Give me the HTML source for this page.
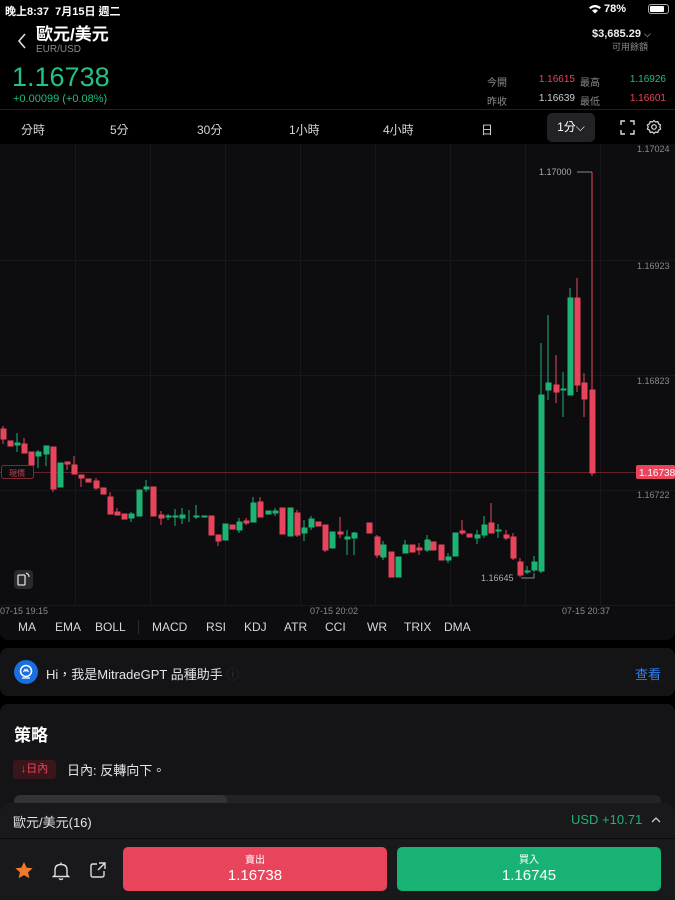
<!DOCTYPE html>
<html><head><meta charset="utf-8">
<style>
*{margin:0;padding:0;box-sizing:border-box}
body{width:675px;height:900px;background:#000;color:#e8e8ea;font-family:"Liberation Sans","Noto Sans CJK TC",sans-serif;position:relative;overflow:hidden}
.a{position:absolute;white-space:nowrap}
.g{color:#1fbf7f}.r{color:#e8455c}.gr{color:#8a8a90}
.tab{position:absolute;top:121px;font-size:12px;color:#d8d8dc}
.ind{position:absolute;top:620px;font-size:12px;color:#d8d8dc}
.st{position:absolute;font-size:10px;text-align:right}
</style></head><body>
<!-- status -->
<div class="a" style="left:5px;top:3px;font-size:11px;font-weight:bold;color:#fff">晚上8:37&nbsp;&nbsp;7月15日 週二</div>
<div class="a" style="left:604px;top:3px;font-size:11px;font-weight:bold;color:#fff">78%</div>
<svg class="a" style="left:588px;top:4px" width="14" height="10" viewBox="0 0 14 10"><path d="M1 3.5Q7 -1.5 13 3.5L11.5 5Q7 1.5 2.5 5ZM4 6.5Q7 4 10 6.5L7 9.5Z" fill="#fff"/></svg>
<div class="a" style="left:648px;top:4px;width:21px;height:10px;border:1px solid #aaa;border-radius:3px"><div style="margin:1px;width:14px;height:6px;background:#fff;border-radius:1px"></div></div>
<!-- header -->
<svg class="a" style="left:16px;top:32px" width="12" height="18"><path d="M9 2L3 9L9 16" stroke="#ddd" stroke-width="1.6" fill="none"/></svg>
<div class="a" style="left:36px;top:20px;font-size:17px;font-weight:bold;color:#fff">歐元/美元</div>
<div class="a gr" style="left:36px;top:44px;font-size:10px">EUR/USD</div>
<div class="a" style="left:592px;top:28px;font-size:11px;font-weight:bold;color:#eee">$3,685.29 <span style="font-weight:normal;font-size:9px">⌵</span></div>
<div class="a gr" style="left:612px;top:40px;font-size:9px">可用餘額</div>
<div class="a g" style="left:12px;top:62px;font-size:27px;color:#22c285">1.16738</div>
<div class="a g" style="left:13px;top:93px;font-size:11px">+0.00099 (+0.08%)</div>
<div class="st gr" style="left:487px;top:74px">今開</div>
<div class="st r" style="right:100px;top:74px">1.16615</div>
<div class="st gr" style="left:580px;top:74px">最高</div>
<div class="st g" style="right:9px;top:74px">1.16926</div>
<div class="st gr" style="left:487px;top:93px">昨收</div>
<div class="st" style="right:100px;top:93px;color:#ccc">1.16639</div>
<div class="st gr" style="left:580px;top:93px">最低</div>
<div class="st r" style="right:9px;top:93px">1.16601</div>
<div class="a" style="left:0;top:109px;width:675px;height:1px;background:#222"></div>
<!-- tabs -->
<div class="tab" style="left:21px">分時</div>
<div class="tab" style="left:110px">5分</div>
<div class="tab" style="left:197px">30分</div>
<div class="tab" style="left:289px">1小時</div>
<div class="tab" style="left:383px">4小時</div>
<div class="tab" style="left:481px">日</div>
<div class="a" style="left:547px;top:113px;width:48px;height:29px;background:#232327;border-radius:5px;font-size:12px;color:#fff;text-align:center;line-height:29px">1分⌵</div>
<svg class="a" style="left:620px;top:120px" width="15" height="15"><path d="M1 5V1H5M10 1H14V5M14 10V14H10M5 14H1V10" stroke="#ddd" stroke-width="1.4" fill="none"/></svg>
<svg class="a" style="left:646px;top:119px" width="16" height="16" viewBox="0 0 16 16"><path d="M8 1.5L9.5 3 11.8 2.6 12.5 4.8 14.6 6 13.8 8 14.6 10 12.5 11.2 11.8 13.4 9.5 13 8 14.5 6.5 13 4.2 13.4 3.5 11.2 1.4 10 2.2 8 1.4 6 3.5 4.8 4.2 2.6 6.5 3Z" stroke="#ddd" stroke-width="1.2" fill="none"/><circle cx="8" cy="8" r="2.3" stroke="#ddd" stroke-width="1.2" fill="none"/></svg>
<!-- chart -->
<div class="a" style="left:0;top:144px;width:675px;height:496px;background:#0d0d10;border-radius:0 0 8px 8px"></div>
<svg class="a" style="left:0;top:144px" width="675" height="470" viewBox="0 144 675 470">
<g stroke="#18181c" stroke-width="1">
<path d="M75.5 144V605M150.5 144V605M225.5 144V605M300.5 144V605M375.5 144V605M450.5 144V605M525.5 144V605M600.5 144V605M0 260.5H675M0 375.5H675M0 490.5H675M0 605.5H675"/>
</g>
<line x1="0" y1="472.5" x2="675" y2="472.5" stroke="#5e232b" stroke-width="1"/>
<g stroke="#e8455c" fill="#e8455c">
<line x1="3" y1="426" x2="3" y2="444"/><rect x="1" y="429" width="5" height="10"/>
<rect x="8" y="441" width="5" height="5"/>
<line x1="24" y1="438" x2="24" y2="453"/><rect x="22" y="444" width="5" height="9"/>
<rect x="29" y="452" width="5" height="13"/>
<line x1="53" y1="447" x2="53" y2="492"/><rect x="51" y="447" width="5" height="42"/>
<line x1="67" y1="462" x2="67" y2="470"/><rect x="65" y="462" width="5" height="2"/>
<line x1="74" y1="456" x2="74" y2="474"/><rect x="72" y="465" width="5" height="9"/>
<line x1="81" y1="475" x2="81" y2="487"/><rect x="79" y="475" width="5" height="3"/>
<rect x="86" y="479" width="5" height="3"/>
<line x1="96" y1="478" x2="96" y2="490"/><rect x="94" y="481" width="5" height="7"/>
<rect x="101" y="488" width="5" height="6"/>
<line x1="110" y1="492" x2="110" y2="514"/><rect x="108" y="497" width="5" height="17"/>
<line x1="117" y1="508" x2="117" y2="515"/><rect x="115" y="512" width="5" height="3"/>
<rect x="122" y="514" width="5" height="5"/>
<line x1="153" y1="487" x2="153" y2="516"/><rect x="151" y="487" width="5" height="29"/>
<line x1="161" y1="511" x2="161" y2="525"/><rect x="159" y="515" width="5" height="3"/>
<line x1="211" y1="516" x2="211" y2="535"/><rect x="209" y="516" width="5" height="19"/>
<line x1="218" y1="535" x2="218" y2="546"/><rect x="216" y="535" width="5" height="6"/>
<rect x="230" y="525" width="5" height="4"/>
<line x1="246" y1="518" x2="246" y2="525"/><rect x="244" y="521" width="5" height="2"/>
<line x1="260" y1="497" x2="260" y2="517"/><rect x="258" y="502" width="5" height="15"/>
<rect x="280" y="508" width="5" height="26"/>
<line x1="297" y1="510" x2="297" y2="537"/><rect x="295" y="513" width="5" height="22"/>
<rect x="316" y="522" width="5" height="4"/>
<line x1="325" y1="525" x2="325" y2="552"/><rect x="323" y="525" width="5" height="25"/>
<line x1="340" y1="517" x2="340" y2="538"/><rect x="338" y="532" width="5" height="2"/>
<rect x="367" y="523" width="5" height="10"/>
<line x1="377" y1="535" x2="377" y2="558"/><rect x="375" y="537" width="5" height="18"/>
<rect x="389" y="552" width="5" height="25"/>
<rect x="410" y="545" width="5" height="7"/>
<line x1="419" y1="543" x2="419" y2="555"/><rect x="417" y="548" width="5" height="2"/>
<rect x="431" y="542" width="5" height="8"/>
<rect x="439" y="545" width="5" height="15"/>
<line x1="462" y1="520" x2="462" y2="535"/><rect x="460" y="531" width="5" height="2"/>
<rect x="467" y="534" width="5" height="3"/>
<line x1="491" y1="503" x2="491" y2="533"/><rect x="489" y="523" width="5" height="10"/>
<line x1="506" y1="530" x2="506" y2="540"/><rect x="504" y="535" width="5" height="3"/>
<line x1="513" y1="533" x2="513" y2="560"/><rect x="511" y="537" width="5" height="21"/>
<line x1="520" y1="558" x2="520" y2="577"/><rect x="518" y="562" width="5" height="13"/>
<line x1="556" y1="355" x2="556" y2="403"/><rect x="554" y="385" width="5" height="7"/>
<line x1="577" y1="278" x2="577" y2="392"/><rect x="575" y="298" width="5" height="87"/>
<line x1="584" y1="373" x2="584" y2="417"/><rect x="582" y="383" width="5" height="16"/>
<line x1="592" y1="172" x2="592" y2="476"/><rect x="590" y="390" width="5" height="83"/>
</g>
<g stroke="#1db374" fill="#1db374">
<line x1="17" y1="433" x2="17" y2="452"/><rect x="15" y="443" width="5" height="2"/>
<line x1="38" y1="450" x2="38" y2="468"/><rect x="36" y="452" width="5" height="4"/>
<line x1="46" y1="446" x2="46" y2="466"/><rect x="44" y="446" width="5" height="8"/>
<rect x="58" y="463" width="5" height="24"/>
<line x1="131" y1="512" x2="131" y2="522"/><rect x="129" y="514" width="5" height="4"/>
<rect x="137" y="490" width="5" height="26"/>
<line x1="146" y1="480" x2="146" y2="492"/><rect x="144" y="487" width="5" height="2"/>
<line x1="168" y1="514" x2="168" y2="520"/><rect x="166" y="516" width="5" height="1"/>
<line x1="175" y1="509" x2="175" y2="526"/><rect x="173" y="516" width="5" height="1"/>
<line x1="182" y1="508" x2="182" y2="524"/><rect x="180" y="515" width="5" height="3"/>
<line x1="189" y1="510" x2="189" y2="522"/>
<line x1="196" y1="505" x2="196" y2="519"/><rect x="194" y="516" width="5" height="1"/>
<rect x="202" y="516" width="5" height="1"/>
<rect x="223" y="524" width="5" height="16"/>
<line x1="239" y1="518" x2="239" y2="533"/><rect x="237" y="522" width="5" height="8"/>
<line x1="253" y1="497" x2="253" y2="522"/><rect x="251" y="503" width="5" height="19"/>
<rect x="266" y="511" width="5" height="3"/>
<line x1="275" y1="508" x2="275" y2="516"/><rect x="273" y="511" width="5" height="2"/>
<rect x="288" y="508" width="5" height="28"/>
<line x1="304" y1="520" x2="304" y2="541"/><rect x="302" y="528" width="5" height="5"/>
<line x1="311" y1="516" x2="311" y2="530"/><rect x="309" y="519" width="5" height="8"/>
<rect x="330" y="532" width="5" height="16"/>
<line x1="347" y1="530" x2="347" y2="555"/><rect x="345" y="537" width="5" height="2"/>
<line x1="354" y1="532" x2="354" y2="555"/><rect x="352" y="533" width="5" height="5"/>
<line x1="383" y1="541" x2="383" y2="560"/><rect x="381" y="545" width="5" height="12"/>
<rect x="396" y="557" width="5" height="20"/>
<line x1="405" y1="540" x2="405" y2="553"/><rect x="403" y="545" width="5" height="8"/>
<line x1="427" y1="535" x2="427" y2="552"/><rect x="425" y="540" width="5" height="10"/>
<line x1="448" y1="553" x2="448" y2="563"/><rect x="446" y="557" width="5" height="3"/>
<rect x="453" y="533" width="5" height="23"/>
<line x1="477" y1="530" x2="477" y2="544"/><rect x="475" y="535" width="5" height="3"/>
<line x1="484" y1="516" x2="484" y2="538"/><rect x="482" y="525" width="5" height="10"/>
<line x1="498" y1="524" x2="498" y2="538"/><rect x="496" y="530" width="5" height="1"/>
<line x1="527" y1="566" x2="527" y2="574"/><rect x="525" y="571" width="5" height="1"/>
<line x1="534" y1="556" x2="534" y2="572"/><rect x="532" y="562" width="5" height="8"/>
<line x1="541" y1="343" x2="541" y2="573"/><rect x="539" y="395" width="5" height="176"/>
<line x1="548" y1="315" x2="548" y2="400"/><rect x="546" y="383" width="5" height="7"/>
<line x1="563" y1="372" x2="563" y2="417"/><rect x="561" y="389" width="5" height="1"/>
<line x1="570" y1="288" x2="570" y2="395"/><rect x="568" y="298" width="5" height="97"/>
</g>
<path d="M577 172H592M521 578H534V573" stroke="#888" stroke-width="1" fill="none"/>
<g font-family="Liberation Sans" font-size="9" fill="#888">
<text x="637" y="152">1.17024</text>
<text x="637" y="269">1.16923</text>
<text x="637" y="384">1.16823</text>
<text x="637" y="498">1.16722</text>
<text x="539" y="175" fill="#aaa">1.17000</text>
<text x="481" y="581" fill="#aaa">1.16645</text>
</g>
<rect x="636" y="465" width="39" height="14" rx="2" fill="#e8455c"/>
<text x="639" y="476" font-family="Liberation Sans" font-size="10" fill="#fff">1.16738</text>
<rect x="1.5" y="465.5" width="32" height="13" rx="2" fill="#0d0d10" stroke="#7a2a33"/>
<text x="9" y="476" font-family="Noto Sans CJK TC" font-size="8" fill="#c64455">現價</text>
<rect x="14" y="570" width="19" height="19" rx="4" fill="#2a2a2e"/>
<rect x="18" y="575" width="7" height="10" rx="1" fill="none" stroke="#ddd" stroke-width="1.3"/>
<path d="M26 573Q29 574 29 577" stroke="#ddd" stroke-width="1.2" fill="none"/>
</svg>
<div class="a gr" style="left:0;top:606px;font-size:9px">07-15 19:15</div>
<div class="a gr" style="left:310px;top:606px;font-size:9px">07-15 20:02</div>
<div class="a gr" style="left:562px;top:606px;font-size:9px">07-15 20:37</div>
<div class="ind" style="left:18px">MA</div>
<div class="ind" style="left:55px">EMA</div>
<div class="ind" style="left:95px">BOLL</div>
<div class="a" style="left:138px;top:620px;width:1px;height:14px;background:#2a2a2e"></div>
<div class="ind" style="left:152px">MACD</div>
<div class="ind" style="left:206px">RSI</div>
<div class="ind" style="left:244px">KDJ</div>
<div class="ind" style="left:284px">ATR</div>
<div class="ind" style="left:325px">CCI</div>
<div class="ind" style="left:367px">WR</div>
<div class="ind" style="left:404px">TRIX</div>
<div class="ind" style="left:444px">DMA</div>
<!-- GPT -->
<div class="a" style="left:0;top:648px;width:675px;height:48px;background:#141417;border-radius:8px"></div>
<div class="a" style="left:14px;top:660px;width:24px;height:24px;border-radius:12px;background:#1a6fe0"></div>
<svg class="a" style="left:14px;top:660px" width="24" height="24"><circle cx="12" cy="11" r="5.5" fill="none" stroke="#fff" stroke-width="1.5"/><path d="M9.5 12L11 9.5 12 11 13 9.5 14.5 12M8 18H16" stroke="#fff" stroke-width="1.2" fill="none"/></svg>
<div class="a" style="left:46px;top:664px;font-size:13px;color:#e4e4e6">Hi，我是MitradeGPT 品種助手 <span style="color:#333">ⓘ</span></div>
<div class="a" style="left:635px;top:664px;font-size:13px;color:#2f7fe8">查看</div>
<!-- strategy -->
<div class="a" style="left:0;top:704px;width:675px;height:120px;background:#141417;border-radius:8px"></div>
<div class="a" style="left:14px;top:721px;font-size:17px;font-weight:bold;color:#fff">策略</div>
<div class="a" style="left:13px;top:760px;width:43px;height:19px;background:#3a1519;border-radius:3px;font-size:11px;color:#e8455c;text-align:center;line-height:19px">↓日內</div>
<div class="a" style="left:67px;top:760px;font-size:13px;color:#e4e4e6">日內: 反轉向下。</div>
<div class="a" style="left:14px;top:795px;width:647px;height:12px;background:#232327;border-radius:6px"></div>
<div class="a" style="left:14px;top:795px;width:213px;height:12px;background:#333337;border-radius:6px"></div>
<!-- bottom -->
<div class="a" style="left:0;top:803px;width:675px;height:97px;background:#19191c;border-radius:10px 10px 0 0"></div>
<div class="a" style="left:13px;top:812px;font-size:13px;color:#e4e4e6">歐元/美元(16)</div>
<div class="a g" style="left:571px;top:812px;font-size:13px;color:#1db374">USD +10.71</div>
<svg class="a" style="left:651px;top:816px" width="10" height="8"><path d="M1 6L5 2 9 6" stroke="#ccc" stroke-width="1.3" fill="none"/></svg>
<div class="a" style="left:0;top:838px;width:675px;height:1px;background:#0a0a0b"></div>
<svg class="a" style="left:14px;top:861px" width="20" height="19" viewBox="0 0 20 19"><path d="M10 1L12.6 6.6 18.6 7.2 14.1 11.2 15.4 17.2 10 14.1 4.6 17.2 5.9 11.2 1.4 7.2 7.4 6.6Z" fill="#f07a2a"/></svg>
<svg class="a" style="left:52px;top:861px" width="18" height="20"><path d="M3 14V9Q3 3.5 9 3.5Q15 3.5 15 9V14L16.5 15.5H1.5Z M7 17.5Q9 19.5 11 17.5M9 1.5V3.5" stroke="#ddd" stroke-width="1.4" fill="none"/></svg>
<svg class="a" style="left:89px;top:861px" width="18" height="18"><path d="M8 3H4Q2 3 2 5V14Q2 16 4 16H13Q15 16 15 14V10M10 2H16V8M16 2L9 9" stroke="#ddd" stroke-width="1.4" fill="none"/></svg>
<div class="a" style="left:123px;top:847px;width:264px;height:44px;background:#e8455c;border-radius:5px;text-align:center;color:#fff"><div style="font-size:10px;margin-top:4px">賣出</div><div style="font-size:15px;margin-top:1px">1.16738</div></div>
<div class="a" style="left:397px;top:847px;width:264px;height:44px;background:#17b274;border-radius:5px;text-align:center;color:#fff"><div style="font-size:10px;margin-top:4px">買入</div><div style="font-size:15px;margin-top:1px">1.16745</div></div>
</body></html>
